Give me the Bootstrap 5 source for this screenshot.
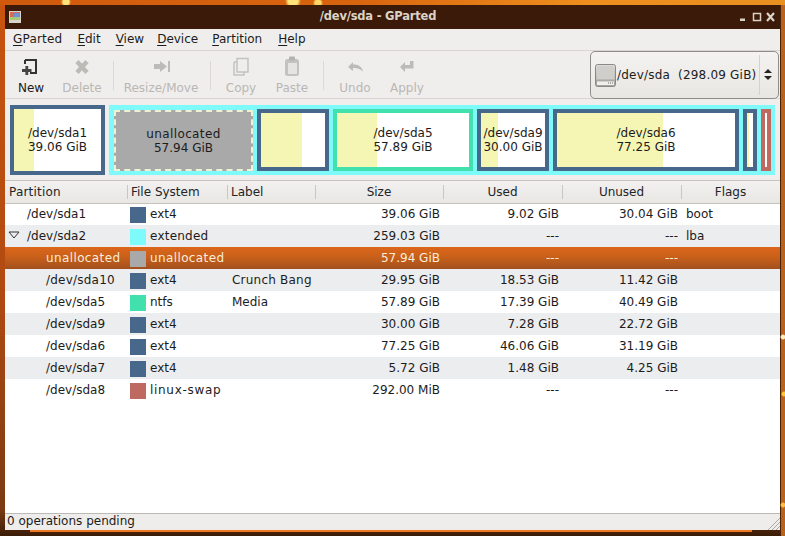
<!DOCTYPE html>
<html lang="en">
<head>
<meta charset="utf-8">
<title>/dev/sda - GParted</title>
<link href="https://cdn.jsdelivr.net/npm/bootstrap@5.3.0/dist/css/bootstrap.min.css" rel="stylesheet">
<style>
html,body{height:100%;}
body{margin:0;overflow:hidden;font-family:"DejaVu Sans",sans-serif;font-size:12px;color:#1c1c1c;padding:5px 5px 6px 5px;
background:
 radial-gradient(circle 5px at 66px 2px,#ffe27a 60%,transparent),
 radial-gradient(circle 8px at 293px 1px,#ffe27a 60%,transparent),
 radial-gradient(circle 5px at 318px 3px,#ffd766 60%,transparent),
 radial-gradient(circle 3px at 783px 337px,#fff0c0 60%,transparent),
 radial-gradient(circle 3px at 784px 394px,#ffc830 60%,transparent),
 radial-gradient(circle 3px at 783px 505px,#ffc040 60%,transparent),
 linear-gradient(#f07820,#f07820) 30px 530px/722px 2px no-repeat,
 linear-gradient(90deg,#cf5a0e 0,#d9640f 45%,#ee8f1e 75%,#e89020 100%) 0 0/100% 5px no-repeat,
 linear-gradient(90deg,transparent 780px,#4a2208 780px 781px,#b8621c 781px),
 linear-gradient(#c8540e,#b04a12 300px,#7a3a12 510px,#3a1c08 536px);}
.gwin{height:100%;background:#f0eeec;width:775px;}
.gtitle{height:24px;background:#3b1a09;color:#dcd3c6;font-weight:700;font-size:11.5px;letter-spacing:-.2px;padding:0 5px 0 4px;}
.gtitle-name{flex:1;text-align:center;padding-right:4px;}
.gmenu{height:22px;border-bottom:1px solid #d9d5d0;padding-left:8px;gap:15px;}
.gmenu span{line-height:21px;}
.gmenu u{text-underline-offset:2px;}
.gm-g{letter-spacing:.2px;}
.gm-v{margin-right:-2px;}
.gm-d{margin-right:-1px;}
.gm-p{margin-right:1px;}
.gtools{height:48px;border-bottom:1px solid #d9d5d0;position:relative;}
.gtool{display:flex;flex-direction:column;align-items:center;padding-top:5px;color:#b9b7b4;height:47px;flex:none;}
.gtool svg{display:block;margin-bottom:3px;height:20px;}
.gtool.live{color:#1c1c1c;}
.gsep{width:1px;height:29px;background:#dcd9d5;margin-top:10px;flex:none;}
.w-new{width:52px}.w-del{width:50px}.w-res{width:94px}.w-cop{width:60px}.w-pas{width:42px}.w-und{width:62px}.w-app{width:42px}
.m6{margin-left:6px}.m2{margin-left:2px}.m10{margin-left:10px}
.gdev{position:absolute;left:585px;top:0;width:189px;height:48px;border:1px solid #8f8d88;border-radius:5px;background:linear-gradient(#f4f3f1,#e8e6e2);padding-left:4px;}
.gdev-txt{margin-left:1px;letter-spacing:.2px;}
.gdev-sep{position:absolute;right:18px;top:3px;bottom:3px;width:1px;background:#d5d2cd;}
.gdev-arrows{position:absolute;right:6px;top:17px;}
.gmap{height:82px;padding:6px 5px 5px 5px;gap:4px;border-bottom:1px solid #c6c3bf;}
.gtile{border:4px solid #47688a;background:#fff;text-align:center;line-height:14px;display:flex;flex-direction:column;justify-content:center;position:relative;flex:none;height:62px;}
.gtile span{position:relative;white-space:nowrap;}
.gtile i{position:absolute;left:0;top:0;bottom:0;background:#f5f6b4;}
.gext{width:666px;height:70px;background:#7efafa;padding:4px 4px 4px 5px;gap:4px;flex:none;}
.gtile.ntfs{border-color:#42e0ac;}
.gtile.swap{border-color:#bf6a60;}
.gtile.gun{background:#a9a9a9;border:2px dashed #f0f0d2;height:61px;margin-top:1px;}
.gtile.root{height:70px;width:95px;}
.gwide{letter-spacing:.38px;}
.gwider{letter-spacing:.7px;}
.gsl{letter-spacing:.22px;}
.gtable{table-layout:fixed;width:775px;margin:0;border-collapse:collapse;font-size:12px;--bs-table-bg:transparent;}
.c1{width:122px}.c2{width:100px}.c3{width:88px}.c4{width:128px}.c5{width:119px}.c6{width:119px}.c7{width:99px}
.gtable th{font-weight:400;height:22px;padding:0;background:linear-gradient(#f3f1ef,#e9e7e4);border-bottom:1px solid #c6c3bf;text-align:center;position:relative;vertical-align:middle;}
.gtable th:first-child{text-align:left;padding-left:4px;letter-spacing:.2px;}
.gtable th:nth-child(2),.gtable th:nth-child(3){text-align:left;padding-left:4px;}
.gtable th+th::before{content:"";position:absolute;left:0;top:4px;bottom:4px;width:1px;background:#c9c6c2;}
.gtable td{height:22px;padding:0;vertical-align:middle;white-space:nowrap;border:0;color:#1c1c1c;background:#fff;}
.gtable tr.alt td{background:#ecedee;}
.gtable tr.sel td{background:linear-gradient(#dc661a,#c9601a 45%,#a2501e);color:#f8ecd8;}
.gr{text-align:right;padding-right:3px!important;}
.gp1{padding-left:22px!important;}
.gp2{padding-left:41px!important;}
.gfl{padding-left:5px!important;}
.gsw{display:inline-block;width:16px;height:16px;vertical-align:middle;margin:0 4px 0 3px;}
.sw-ext4{background:#47688a}.sw-ext{background:#7efafa}.sw-un{background:#a9a9a9}.sw-ntfs{background:#42e0ac}.sw-swap{background:#bf6a60}
.gtwist{position:absolute;margin-left:-19px;margin-top:4px;}
.glbl{padding-left:5px!important;}
.gbody{flex:1;background:#fff;min-height:0;}
.gstatus{height:17px;background:#efedeb;border-top:1px solid #bdbab6;padding-left:2px;line-height:15px;position:relative;}
.ggrip{position:absolute;right:0;bottom:0;}
</style>
</head>
<body>
<div class="gwin d-flex flex-column">
  <div class="gtitle d-flex align-items-center">
    <svg width="12" height="12" viewBox="0 0 12 12"><rect width="12" height="12" fill="#d8d4cc"/><rect x="1" y="1" width="10" height="5" fill="#d86a50"/><rect x="5" y="2" width="6" height="5" fill="#6f8fd8"/><rect x="1" y="6" width="10" height="3" fill="#a8c878"/></svg>
    <span class="gtitle-name">/dev/sda - GParted</span>
    <svg width="36" height="12" viewBox="0 0 36 12" fill="none" stroke="#dcd3c6"><rect x="1" y="7.5" width="5" height="2.5" fill="#dcd3c6" stroke="none"/><rect x="14.5" y="2.5" width="7" height="7" stroke-width="1.5"/><path d="M28 2l7 8M35 2l-7 8" stroke-width="2.2"/></svg>
  </div>
  <div class="gmenu d-flex">
    <span class="gm-g"><u>G</u>Parted</span><span><u>E</u>dit</span><span class="gm-v"><u>V</u>iew</span><span class="gm-d"><u>D</u>evice</span><span class="gm-p"><u>P</u>artition</span><span><u>H</u>elp</span>
  </div>
  <div class="gtools d-flex">
    <div class="gtool live w-new">
      <svg width="22" height="20" viewBox="0 0 22 20" fill="none"><path d="M5 4h11v13h-6M5 4v4" stroke="#333" stroke-width="2"/><path d="M2 14.5h9.5M6.8 10v9" stroke="#444" stroke-width="2.8"/></svg>
      <span>New</span></div>
    <div class="gtool w-del">
      <svg width="20" height="20" viewBox="0 0 20 20" fill="none"><path d="M5 5.5l10 11M15 5.5l-10 11" stroke="#bdbbb8" stroke-width="4.5"/></svg>
      <span>Delete</span></div>
    <div class="gsep m6"></div>
    <div class="gtool w-res">
      <svg width="20" height="20" viewBox="0 0 20 20"><path d="M3 8h6V5l7 5.5-7 5.5v-3H3z" fill="#bdbbb8"/><rect x="17" y="5" width="2" height="11" fill="#bdbbb8"/></svg>
      <span>Resize/Move</span></div>
    <div class="gsep m2"></div>
    <div class="gtool w-cop">
      <svg width="20" height="20" viewBox="0 0 20 20" fill="#f0eeec" stroke="#c4c2bf" stroke-width="1.5"><path d="M3 6h4M3 6v13h10v-3"/><rect x="6" y="2.5" width="11" height="13.5"/></svg>
      <span>Copy</span></div>
    <div class="gtool w-pas">
      <svg width="20" height="20" viewBox="0 0 20 20"><rect x="3" y="3" width="14" height="17" rx="2.5" fill="#c4c2bf"/><rect x="7" y="0.5" width="6" height="4" rx="1" fill="#b4b2af"/><rect x="6" y="7" width="9" height="11" fill="#e6e4e1"/></svg>
      <span>Paste</span></div>
    <div class="gsep m10"></div>
    <div class="gtool w-und">
      <svg width="20" height="20" viewBox="0 0 20 20"><path d="M3 11l5-5v2.500c5 0 9 1.500 10 7.500-2-3-5-4-10-4V15z" fill="#bdbbb8"/></svg>
      <span>Undo</span></div>
    <div class="gtool w-app">
      <svg width="20" height="20" viewBox="0 0 20 20"><path d="M13 5h3.500v7.500H8V16l-5-5 5-5v3h5z" fill="#bdbbb8"/></svg>
      <span>Apply</span></div>
    <div class="gdev d-flex align-items-center">
      <svg width="21" height="23" viewBox="0 0 21 23"><defs><linearGradient id="hd" x1="0" y1="0" x2="0" y2="1"><stop offset="0" stop-color="#dedddb"/><stop offset="1" stop-color="#a9a8a4"/></linearGradient></defs><rect x=".5" y=".5" width="20" height="22" rx="2" fill="url(#hd)" stroke="#8a8985"/><rect x="2" y="2" width="17" height="13" fill="#cfcecb"/><rect x="1.500" y="17" width="18" height="4.500" fill="#f0efec" stroke="#8a8985" stroke-width=".6"/><path d="M13 19h5" stroke="#666" stroke-width="1.200" stroke-dasharray="1 1"/></svg>
      <span class="gdev-txt">/dev/sda&nbsp; (298.09 GiB)</span>
      <div class="gdev-sep"></div>
      <svg class="gdev-arrows" width="8" height="11" viewBox="0 0 8 11" fill="#222"><path d="M4 0l4 4H0zM4 11L0 7h8z"/></svg>
    </div>
  </div>
  <div class="gmap d-flex">
    <div class="gtile root"><i style="width:20px"></i><span>/dev/sda1</span><span>39.06 GiB</span></div>
    <div class="gext d-flex">
      <div class="gtile gun" style="width:139px"><span class="gwide">unallocated</span><span>57.94 GiB</span></div>
      <div class="gtile" style="width:72px"><i style="width:41px"></i></div>
      <div class="gtile ntfs" style="width:140px"><i style="width:40px"></i><span>/dev/sda5</span><span>57.89 GiB</span></div>
      <div class="gtile" style="width:72px"><i style="width:17px"></i><span>/dev/sda9</span><span>30.00 GiB</span></div>
      <div class="gtile" style="width:186px"><i style="width:106px"></i><span>/dev/sda6</span><span>77.25 GiB</span></div>
      <div class="gtile" style="width:14px"><i style="width:2px"></i></div>
      <div class="gtile swap" style="width:10px"></div>
    </div>
  </div>
  <table class="table gtable">
    <colgroup><col class="c1"><col class="c2"><col class="c3"><col class="c4"><col class="c5"><col class="c6"><col class="c7"></colgroup>
    <thead><tr><th>Partition</th><th>File System</th><th>Label</th><th>Size</th><th>Used</th><th>Unused</th><th>Flags</th></tr></thead>
    <tbody>
      <tr><td class="gp1">/dev/sda1</td><td><span class="gsw sw-ext4"></span>ext4</td><td class="glbl"></td><td class="gr">39.06 GiB</td><td class="gr">9.02 GiB</td><td class="gr">30.04 GiB</td><td class="gfl">boot</td></tr>
      <tr class="alt"><td class="gp1"><svg class="gtwist" width="12" height="8" viewBox="0 0 12 8" fill="none" stroke="#333"><path d="M1 1h10L6 7z"/></svg>/dev/sda2</td><td><span class="gsw sw-ext"></span><span class="gsl">extended</span></td><td class="glbl"></td><td class="gr">259.03 GiB</td><td class="gr">---</td><td class="gr">---</td><td class="gfl">lba</td></tr>
      <tr class="sel"><td class="gp2"><span class="gwide">unallocated</span></td><td><span class="gsw sw-un"></span><span class="gwide">unallocated</span></td><td class="glbl"></td><td class="gr">57.94 GiB</td><td class="gr">---</td><td class="gr">---</td><td class="gfl"></td></tr>
      <tr class="alt"><td class="gp2"><span class="gsl">/dev/sda10</span></td><td><span class="gsw sw-ext4"></span>ext4</td><td class="glbl"><span class="gsl">Crunch Bang</span></td><td class="gr">29.95 GiB</td><td class="gr">18.53 GiB</td><td class="gr">11.42 GiB</td><td class="gfl"></td></tr>
      <tr><td class="gp2">/dev/sda5</td><td><span class="gsw sw-ntfs"></span>ntfs</td><td class="glbl">Media</td><td class="gr">57.89 GiB</td><td class="gr">17.39 GiB</td><td class="gr">40.49 GiB</td><td class="gfl"></td></tr>
      <tr class="alt"><td class="gp2">/dev/sda9</td><td><span class="gsw sw-ext4"></span>ext4</td><td class="glbl"></td><td class="gr">30.00 GiB</td><td class="gr">7.28 GiB</td><td class="gr">22.72 GiB</td><td class="gfl"></td></tr>
      <tr><td class="gp2">/dev/sda6</td><td><span class="gsw sw-ext4"></span>ext4</td><td class="glbl"></td><td class="gr">77.25 GiB</td><td class="gr">46.06 GiB</td><td class="gr">31.19 GiB</td><td class="gfl"></td></tr>
      <tr class="alt"><td class="gp2">/dev/sda7</td><td><span class="gsw sw-ext4"></span>ext4</td><td class="glbl"></td><td class="gr">5.72 GiB</td><td class="gr">1.48 GiB</td><td class="gr">4.25 GiB</td><td class="gfl"></td></tr>
      <tr><td class="gp2">/dev/sda8</td><td><span class="gsw sw-swap"></span><span class="gwider">linux-swap</span></td><td class="glbl"></td><td class="gr">292.00 MiB</td><td class="gr">---</td><td class="gr">---</td><td class="gfl"></td></tr>
    </tbody>
  </table>
  <div class="gbody"></div>
  <div class="gstatus">0 operations pending
    <svg class="ggrip" width="14" height="14" viewBox="0 0 14 14" stroke="#aaa8a4"><path d="M14 2L2 14M14 6l-8 8M14 10l-4 4"/></svg>
  </div>
</div>
<script src="https://cdn.jsdelivr.net/npm/bootstrap@5.3.0/dist/js/bootstrap.bundle.min.js"></script>
</body>
</html>
